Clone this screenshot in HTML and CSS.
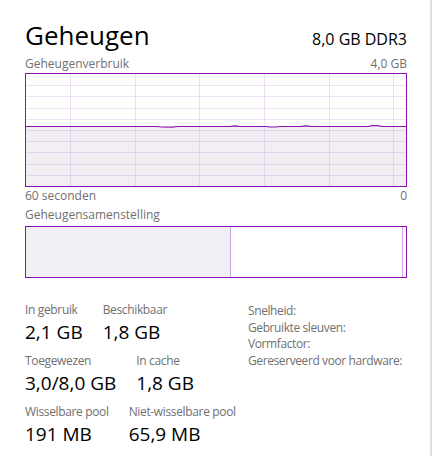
FILE: index.html
```html
<!DOCTYPE html>
<html lang="nl">
<head>
<meta charset="utf-8">
<title>Geheugen</title>
<link rel="stylesheet" href="styles.css">
</head>
<body>
<div class="window">
  <div class="page">
    <header class="header">
      <h1 class="title">Geheugen</h1>
      <span class="spec">8,0 GB DDR3</span>
    </header>

    <div class="row-labels top"><span>Geheugenverbruik</span><span>4,0 GB</span></div>
    <div class="graph">
      <svg width="380" height="112" viewBox="0 0 380 112">
        <path class="fill" d="M0 52.5 L130 52.5 L136 53 L146 53.2 L152 52.5 L205 52.3 L209 51.8 L213 52.3 L240 52.5 L244 53 L250 53 L254 52.5 L276 52.4 L280 51.8 L284 52.4 L342 52.5 L346 51.6 L352 51.6 L356 52.5 L380 52.5 L380 112 L0 112 Z"/>
        <g class="grid">
          <line x1="0" y1="11.5" x2="380" y2="11.5"/>
          <line x1="0" y1="22.5" x2="380" y2="22.5"/>
          <line x1="0" y1="34.5" x2="380" y2="34.5"/>
          <line x1="0" y1="45.5" x2="380" y2="45.5"/>
          <line x1="0" y1="56.5" x2="380" y2="56.5"/>
          <line x1="0" y1="67.5" x2="380" y2="67.5"/>
          <line x1="0" y1="78.5" x2="380" y2="78.5"/>
          <line x1="0" y1="90.5" x2="380" y2="90.5"/>
          <line x1="0" y1="101.5" x2="380" y2="101.5"/>
          <line x1="44.5" y1="0" x2="44.5" y2="112"/>
          <line x1="109.5" y1="0" x2="109.5" y2="112"/>
          <line x1="173.5" y1="0" x2="173.5" y2="112"/>
          <line x1="238.5" y1="0" x2="238.5" y2="112"/>
          <line x1="303.5" y1="0" x2="303.5" y2="112"/>
          <line x1="367.5" y1="0" x2="367.5" y2="112"/>
        </g>
        <polyline class="line" points="0,52.5 130,52.5 136,53 146,53.2 152,52.5 205,52.3 209,51.8 213,52.3 240,52.5 244,53 250,53 254,52.5 276,52.4 280,51.8 284,52.4 342,52.5 346,51.6 352,51.6 356,52.5 380,52.5"/>
      </svg>
    </div>
    <div class="row-labels axis"><span>60 seconden</span><span>0</span></div>

    <div class="row-labels section"><span>Geheugensamenstelling</span></div>
    <div class="composition">
      <div class="seg seg-used"></div>
      <div class="seg seg-free"></div>
      <div class="seg seg-rest"></div>
    </div>

    <div class="stats">
      <div class="stats-main">
        <div class="stat-row">
          <div class="stat"><div class="label">In gebruik</div><div class="value">2,1 GB</div></div>
          <div class="stat"><div class="label">Beschikbaar</div><div class="value">1,8 GB</div></div>
        </div>
        <div class="stat-row">
          <div class="stat"><div class="label">Toegewezen</div><div class="value">3,0/8,0 GB</div></div>
          <div class="stat"><div class="label">In cache</div><div class="value">1,8 GB</div></div>
        </div>
        <div class="stat-row">
          <div class="stat"><div class="label">Wisselbare pool</div><div class="value">191 MB</div></div>
          <div class="stat"><div class="label">Niet-wisselbare pool</div><div class="value">65,9 MB</div></div>
        </div>
      </div>
      <ul class="details">
        <li>Snelheid:</li>
        <li>Gebruikte sleuven:</li>
        <li>Vormfactor:</li>
        <li>Gereserveerd voor hardware:</li>
      </ul>
    </div>
  </div>
</div>
</body>
</html>
```

FILE: styles.css
```css
html, body {
  margin: 0;
  padding: 0;
  background: #ffffff;
}

body {
  font-family: "Open Sans", "Noto Sans", sans-serif;
  color: #000000;
}

.window {
  width: 430px;
  height: 456px;
  border-right: 2px solid #e0e0e0;
  overflow: hidden;
}

.page {
  padding: 19px 0 0 25px;
  width: 382px;
}

.header {
  display: flex;
  justify-content: space-between;
  align-items: baseline;
  height: 32px;
}

.title {
  margin: 0;
  font-size: 26px;
  font-weight: 400;
  line-height: 32px;
}

.spec {
  font-size: 16px;
  line-height: 32px;
}

.row-labels {
  display: flex;
  justify-content: space-between;
  font-size: 12px;
  line-height: 16px;
  color: #707070;
}

.row-labels.top {
  margin-top: 5px;
}

.row-labels.axis {
  margin-top: 1px;
}

.row-labels.section {
  margin-top: 3px;
}

.graph {
  margin-top: 1px;
  border: 1px solid #8b12ae;
  height: 112px;
  background: #ffffff;
}

.graph svg {
  display: block;
}

.graph .fill {
  fill: #f2eef4;
}

.graph .grid line {
  stroke: rgba(139, 18, 174, 0.12);
  stroke-width: 1;
}

.graph .line {
  fill: none;
  stroke: #8b12ae;
  stroke-width: 1.2;
}

.composition {
  margin-top: 3px;
  display: flex;
  height: 50px;
  border: 1px solid #8b12ae;
}

.seg {
  box-sizing: border-box;
  height: 100%;
}

.seg-used {
  width: 205px;
  background: #f2eff4;
  border-right: 1px solid #cfa7df;
}

.seg-free {
  width: 172px;
  background: #ffffff;
  border-right: 1px solid #cfa7df;
}

.seg-rest {
  flex: 1;
  background: #ffffff;
}

.stats {
  margin-top: 24px;
  display: flex;
}

.stats-main {
  width: 223px;
  flex-shrink: 0;
}

.stat-row {
  display: flex;
  gap: 20px;
  margin-bottom: 9px;
}

.stat {
  flex-shrink: 0;
  white-space: nowrap;
}

.label {
  font-size: 12px;
  line-height: 16px;
  color: #707070;
  letter-spacing: -0.35px;
}

.value {
  margin-top: 2px;
  font-size: 19px;
  line-height: 24px;
}

.details {
  list-style: none;
  margin: 0;
  padding: 1px 0 0 0;
  font-size: 12px;
  line-height: 16.67px;
  color: #707070;
  white-space: nowrap;
  letter-spacing: -0.4px;
}
```
